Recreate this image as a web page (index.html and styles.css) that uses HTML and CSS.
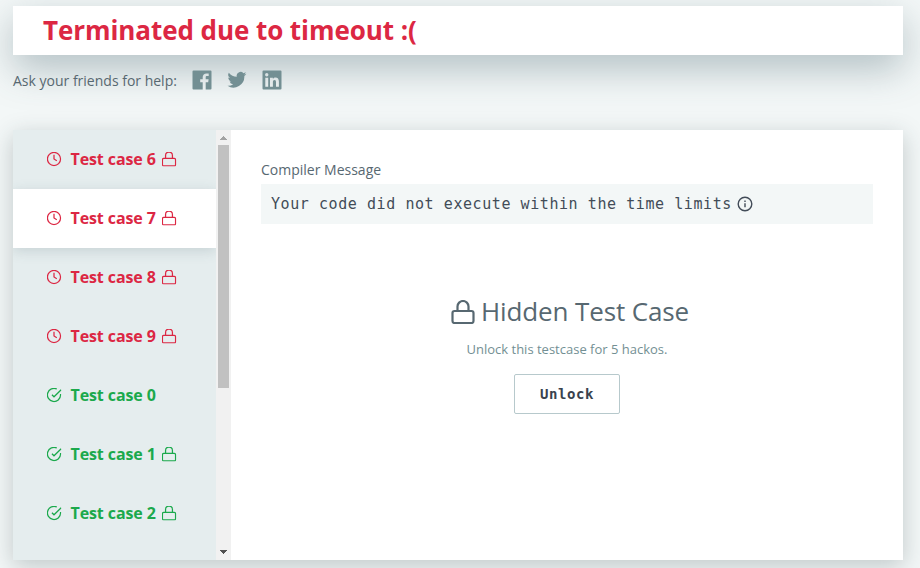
FILE: index.html
```html
<!DOCTYPE html>
<html lang="en">
<head>
<meta charset="utf-8">
<title>Submission result</title>
<link rel="stylesheet" href="styles.css">
</head>
<body>
<svg class="sprite" aria-hidden="true">
  <defs>
  <symbol id="clock" viewBox="0 0 24 24"><circle cx="12" cy="12" r="10.5"/><path d="M12 5v7l4.500 2.800"/></symbol>
  <symbol id="check" viewBox="0 0 24 24"><path d="M22.500 10.500v1.500A10.500 10.500 0 1 1 16.500 2.400M23.500 3.500 12 14.800 8.700 11.500"/></symbol>
  <symbol id="lock" viewBox="0 0 24 24"><rect x="1.500" y="11" width="21" height="12" rx="2"/><path d="M6.500 11V6.500a5.500 5.500 0 0 1 11 0V11"/></symbol>
  </defs>
</svg>
<header class="banner"><h1>Terminated due to timeout :(</h1></header>
<div class="share">
  <span>Ask your friends for help:</span>
  <svg class="social" viewBox="0 0 20 20"><path fill-rule="evenodd" d="M1.500.5h17a1 1 0 0 1 1 1v17a1 1 0 0 1-1 1h-4.800v-7.300h2.500l.4-2.900h-2.900V7.500c0-.9.300-1.400 1.500-1.400h1.500V3.500c-.4 0-1.200-.1-2.200-.1-2.300 0-3.800 1.300-3.800 3.800v2.100H8.200v2.900h2.500v7.300H1.500a1 1 0 0 1-1-1v-17a1 1 0 0 1 1-1z"/></svg>
  <svg class="social" viewBox="0 0 24 24"><path d="M23.300 4.600a9.500 9.500 0 0 1-2.700.8 4.700 4.700 0 0 0 2-2.600 9 9 0 0 1-2.900 1.100A4.600 4.600 0 0 0 11.800 8.200 13.100 13.100 0 0 1 2.200 3.400a4.600 4.600 0 0 0 1.400 6.200 4.500 4.500 0 0 1-2.100-.6c0 2.300 1.500 4.200 3.700 4.700a4.600 4.600 0 0 1-2.100.1 4.600 4.600 0 0 0 4.300 3.200 9.300 9.300 0 0 1-6.800 1.900 13.100 13.100 0 0 0 20.200-11.700 9.400 9.400 0 0 0 2.500-2.600z"/></svg>
  <svg class="social" viewBox="0 0 20 20"><path fill-rule="evenodd" d="M1.500.5h17a1 1 0 0 1 1 1v17a1 1 0 0 1-1 1h-17a1 1 0 0 1-1-1v-17a1 1 0 0 1 1-1zM3.300 7.700v9h2.900v-9zM4.750 3a1.700 1.700 0 1 0 0 3.400 1.700 1.700 0 0 0 0-3.400zM8 7.700v9h2.900v-4.600c0-1.300.5-2.100 1.600-2.100s1.500.8 1.500 2.200v4.500h2.900v-5c0-2.700-1.200-4.200-3.400-4.200-1.300 0-2.200.7-2.600 1.400V7.700z"/></svg>
</div>
<main class="results">
  <nav class="cases">
    <a class="case failed"><svg><use href="#clock"/></svg><span>Test case 6</span><svg><use href="#lock"/></svg></a>
    <a class="case failed active"><svg><use href="#clock"/></svg><span>Test case 7</span><svg><use href="#lock"/></svg></a>
    <a class="case failed"><svg><use href="#clock"/></svg><span>Test case 8</span><svg><use href="#lock"/></svg></a>
    <a class="case failed"><svg><use href="#clock"/></svg><span>Test case 9</span><svg><use href="#lock"/></svg></a>
    <a class="case"><svg><use href="#check"/></svg><span>Test case 0</span></a>
    <a class="case"><svg><use href="#check"/></svg><span>Test case 1</span><svg><use href="#lock"/></svg></a>
    <a class="case"><svg><use href="#check"/></svg><span>Test case 2</span><svg><use href="#lock"/></svg></a>
  </nav>
  <div class="scrollbar">
    <svg class="arrow up" viewBox="0 0 7 4"><path d="M3 0h1v1h1v1h1v1h1v1H0V3h1V2h1V1h1z"/></svg>
    <div class="thumb"></div>
    <svg class="arrow down" viewBox="0 0 7 4"><path d="M0 0h7v1H6v1H5v1H4v1H3V3H2V2H1V1H0z"/></svg>
  </div>
  <section class="detail">
    <div class="label">Compiler Message</div>
    <div class="message"><span>Your code did not execute within the time limits</span><svg viewBox="0 0 16 16"><circle cx="8" cy="8" r="6.800"/><path d="M8 7.200v4M8 4.500v1.400"/></svg></div>
    <div class="hidden-case">
      <h2><svg><use href="#lock"/></svg><span>Hidden Test Case</span></h2>
      <p>Unlock this testcase for 5 hackos.</p>
      <button type="button">Unlock</button>
    </div>
  </section>
</main>
</body>
</html>
```
FILE: styles.css
```css
* { box-sizing: border-box; }
body {
  margin: 0;
  padding: 6px 17px 8px 13px;
  height: 568px;
  overflow: hidden;
  background: #f3f7f7;
  font-family: "Open Sans", sans-serif;
  color: #576871;
}
h1, h2, p { margin: 0; }
svg { display: block; flex: none; }
.sprite { position: absolute; width: 0; height: 0; }
.banner {
  height: 49px;
  padding-left: 30px;
  background: #fff;
  box-shadow: 0 14px 38px rgba(57, 90, 100, .35);
}
.banner h1 {
  color: #dc2743;
  font-size: 26px;
  line-height: 49px;
  font-weight: 700;
  letter-spacing: -.07px;
}
.share {
  position: relative;
  display: flex;
  align-items: center;
  height: 50px;
  margin-bottom: 25px;
  font-size: 14px;
}
.share span { width: 179px; line-height: 20px; padding-top: 2px; }
.social { width: 20px; height: 20px; margin-right: 15px; fill: #738f93; }
.results {
  position: relative;
  display: flex;
  height: 430px;
  background: #fff;
  box-shadow: 0 6px 22px rgba(40, 60, 65, .25);
}
.cases { width: 203px; overflow: hidden; background: #e5edee; }
.case {
  display: flex;
  align-items: center;
  height: 59px;
  padding: 0 0 2px 33px;
  color: #1ba94c;
  font-size: 16px;
  font-weight: 700;
}
.case.failed { color: #dc2743; }
.case.active { position: relative; background: #fff; box-shadow: 0 3px 12px rgba(60, 90, 100, .18); }
.case svg { width: 16px; height: 16px; margin-top: 1px; padding: .5px; fill: none; stroke: currentColor; stroke-width: 2; }
.case span { width: 90.5px; margin: 0 0 0 8.5px; white-space: nowrap; letter-spacing: -.1px; }
.scrollbar {
  display: flex;
  flex-direction: column;
  align-items: center;
  width: 15px;
  background: #f1f1f1;
}
.arrow { width: 7px; height: 4px; fill: #505050; }
.arrow.up { margin: 6px 0 5px; fill: #a3a3a3; }
.arrow.down { margin: auto 0 6px; }
.thumb { width: 11px; height: 243px; background: #c1c1c1; }
.detail { flex: 1; padding: 30px; }
.label { height: 24px; font-size: 14px; line-height: 20px; }
.message {
  display: flex;
  align-items: center;
  height: 40px;
  padding-left: 10px;
  background: #f3f7f7;
  color: #424c58;
  font-family: "DejaVu Sans Mono", monospace;
  font-size: 15px;
  letter-spacing: .57px;
  white-space: nowrap;
}
.message svg { width: 16px; height: 16px; margin-left: 5px; fill: none; stroke: currentColor; stroke-width: 1.4; }
.hidden-case { display: flex; flex-direction: column; align-items: center; padding-top: 69px; }
h2 { display: flex; align-items: center; height: 36px; margin-left: 6px; font-size: 26px; font-weight: 400; letter-spacing: -.12px; }
h2 svg { width: 24px; height: 24px; margin: 2px 6px 0 0; fill: none; stroke: currentColor; stroke-width: 2.2; }
.hidden-case p { height: 45px; padding-top: 11px; color: #738f93; font-size: 13px; line-height: 18px; }
button {
  width: 106px;
  height: 40px;
  border: 1px solid #b7c9cc;
  border-radius: 2px;
  background: #fff;
  color: #39424e;
  font: 700 14px "DejaVu Sans Mono", monospace;
  letter-spacing: .57px;
}
```
